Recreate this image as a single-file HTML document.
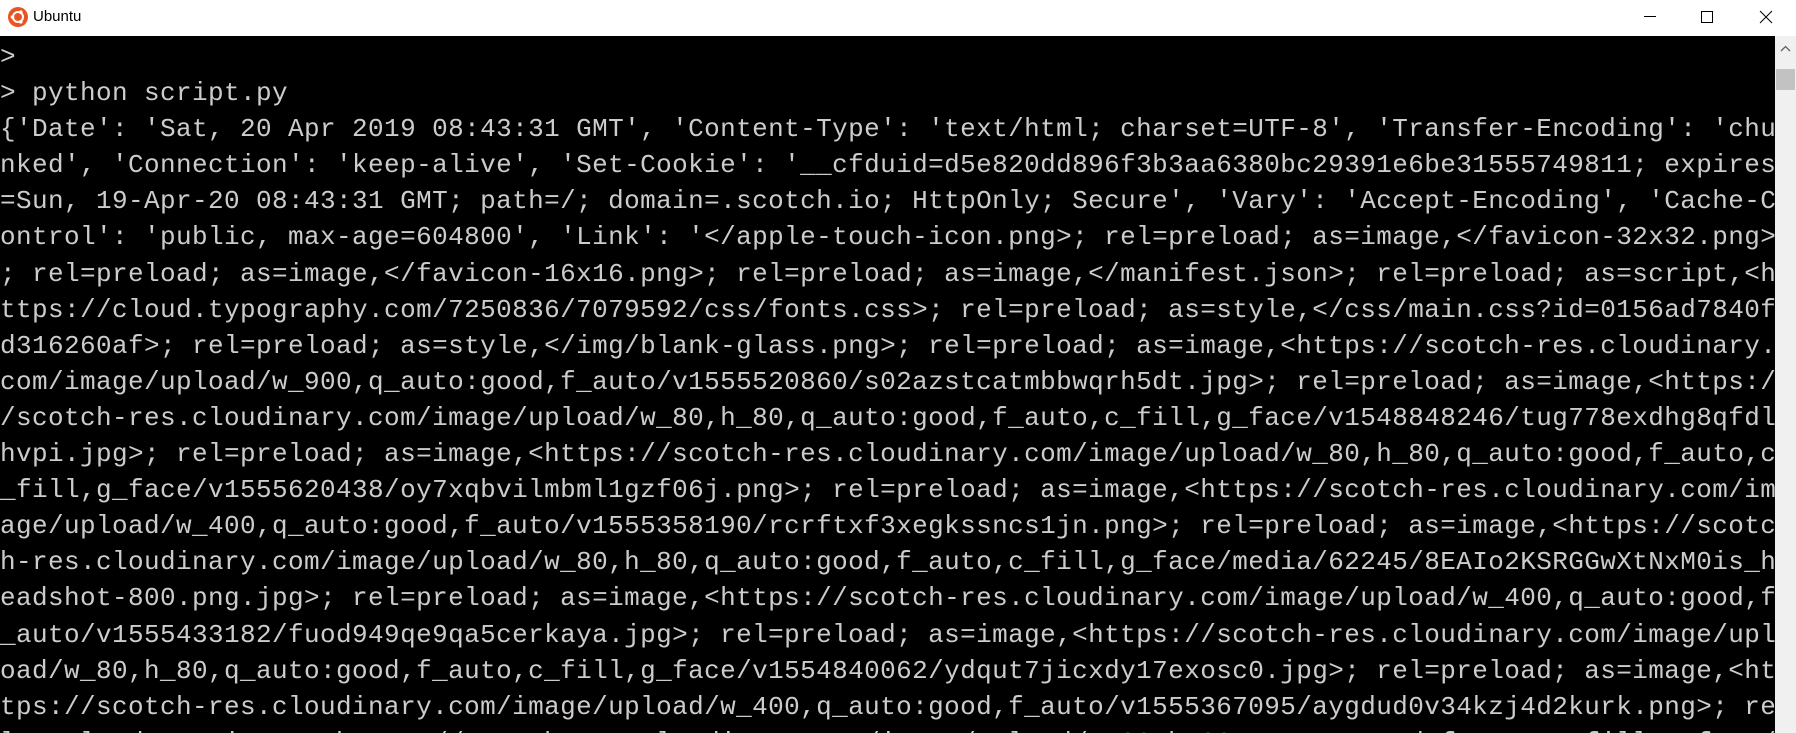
<!DOCTYPE html>
<html><head><meta charset="utf-8"><style>
html,body{margin:0;padding:0;width:1796px;height:733px;overflow:hidden;background:#fff;}
.title{position:absolute;left:0;top:0;width:1796px;height:36px;background:#fff;font-family:"Liberation Sans",sans-serif;font-size:15px;color:#000;}
.title .t{position:absolute;left:33px;top:8px;}
.logo{position:absolute;left:8px;top:7px;width:20px;height:20px;border-radius:50%;background:#e95420;}
.term{position:absolute;left:0;top:36px;width:1775px;height:697px;background:#000;overflow:hidden;}
pre{margin:0;position:absolute;left:0;top:3px;font-family:"Liberation Mono",monospace;font-size:26px;letter-spacing:0.4px;line-height:36.1px;color:#cccccc;white-space:pre;}
.sb{position:absolute;left:1775px;top:36px;width:21px;height:697px;background:#f0f0f0;}
.thumb{position:absolute;left:1px;top:33px;width:19px;height:21px;background:#c2c2c2;}
</style></head><body>
<div class="title">
<div class="logo"><svg width="20" height="20" viewBox="0 0 20 20"><circle cx="10" cy="10" r="5" fill="none" stroke="#fff" stroke-width="2"/><circle cx="4.5" cy="10" r="1.8" fill="#fff"/><circle cx="12.8" cy="5.2" r="1.8" fill="#fff"/><circle cx="12.8" cy="14.8" r="1.8" fill="#fff"/></svg></div>
<span class="t">Ubuntu</span>
<svg style="position:absolute;left:1642px;top:9px" width="16" height="16"><line x1="2" y1="7.5" x2="14" y2="7.5" stroke="#000" stroke-width="1"/></svg>
<svg style="position:absolute;left:1699px;top:9px" width="16" height="16"><rect x="2.5" y="2.5" width="11" height="11" fill="none" stroke="#000" stroke-width="1"/></svg>
<svg style="position:absolute;left:1758px;top:9px" width="16" height="16"><path d="M2 2L14 14M14 2L2 14" stroke="#000" stroke-width="1"/></svg>
</div>
<div class="term"><pre>&gt;
&gt; python script.py
{'Date': 'Sat, 20 Apr 2019 08:43:31 GMT', 'Content-Type': 'text/html; charset=UTF-8', 'Transfer-Encoding': 'chu
nked', 'Connection': 'keep-alive', 'Set-Cookie': '__cfduid=d5e820dd896f3b3aa6380bc29391e6be31555749811; expires
=Sun, 19-Apr-20 08:43:31 GMT; path=/; domain=.scotch.io; HttpOnly; Secure', 'Vary': 'Accept-Encoding', 'Cache-C
ontrol': 'public, max-age=604800', 'Link': '&lt;/apple-touch-icon.png&gt;; rel=preload; as=image,&lt;/favicon-32x32.png&gt;
; rel=preload; as=image,&lt;/favicon-16x16.png&gt;; rel=preload; as=image,&lt;/manifest.json&gt;; rel=preload; as=script,&lt;h
ttps://cloud.typography.com/7250836/7079592/css/fonts.css&gt;; rel=preload; as=style,&lt;/css/main.css?id=0156ad7840f
d316260af&gt;; rel=preload; as=style,&lt;/img/blank-glass.png&gt;; rel=preload; as=image,&lt;https://scotch-res.cloudinary.
com/image/upload/w_900,q_auto:good,f_auto/v1555520860/s02azstcatmbbwqrh5dt.jpg&gt;; rel=preload; as=image,&lt;https:/
/scotch-res.cloudinary.com/image/upload/w_80,h_80,q_auto:good,f_auto,c_fill,g_face/v1548848246/tug778exdhg8qfdl
hvpi.jpg&gt;; rel=preload; as=image,&lt;https://scotch-res.cloudinary.com/image/upload/w_80,h_80,q_auto:good,f_auto,c
_fill,g_face/v1555620438/oy7xqbvilmbml1gzf06j.png&gt;; rel=preload; as=image,&lt;https://scotch-res.cloudinary.com/im
age/upload/w_400,q_auto:good,f_auto/v1555358190/rcrftxf3xegkssncs1jn.png&gt;; rel=preload; as=image,&lt;https://scotc
h-res.cloudinary.com/image/upload/w_80,h_80,q_auto:good,f_auto,c_fill,g_face/media/62245/8EAIo2KSRGGwXtNxM0is_h
eadshot-800.png.jpg&gt;; rel=preload; as=image,&lt;https://scotch-res.cloudinary.com/image/upload/w_400,q_auto:good,f
_auto/v1555433182/fuod949qe9qa5cerkaya.jpg&gt;; rel=preload; as=image,&lt;https://scotch-res.cloudinary.com/image/upl
oad/w_80,h_80,q_auto:good,f_auto,c_fill,g_face/v1554840062/ydqut7jicxdy17exosc0.jpg&gt;; rel=preload; as=image,&lt;ht
tps://scotch-res.cloudinary.com/image/upload/w_400,q_auto:good,f_auto/v1555367095/aygdud0v34kzj4d2kurk.png&gt;; re
l=preload; as=image,&lt;https://scotch-res.cloudinary.com/image/upload/w_80,h_80,q_auto:good,f_auto,c_fill,g_face/
</pre></div>
<div class="sb"><svg style="position:absolute;left:5px;top:9px" width="11" height="8"><path d="M1 6L5.5 1.5L10 6" fill="none" stroke="#606060" stroke-width="1.3"/></svg><div class="thumb"></div></div>
</body></html>
